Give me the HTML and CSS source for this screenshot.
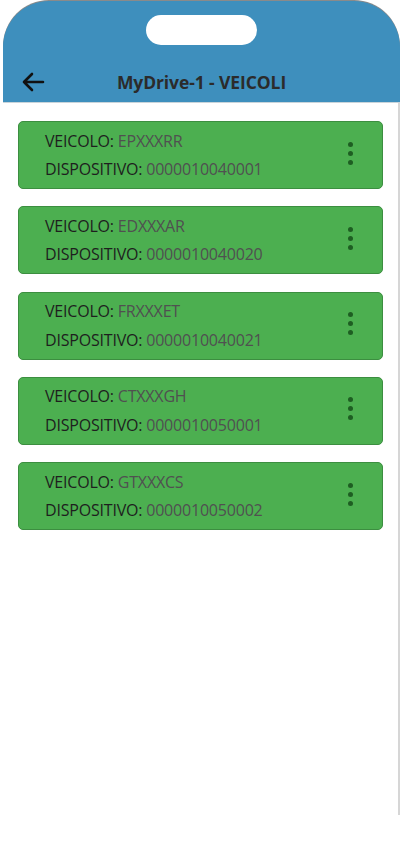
FILE: index.html
```html
<!DOCTYPE html>
<html lang="it">
<head>
	<meta charset="utf-8" />
	<meta name="viewport" content="width=device-width, initial-scale=1" />
	<title>MyDrive-1 - VEICOLI</title>
	<link rel="stylesheet" href="styles.css">
</head>
<body>

	<div class="phone">

		<header class="topbar">
			<div class="notch"></div>
			<div class="bar">
				<svg class="back" width="24" height="20" viewBox="0 0 24 20">
					<path d="M22 10H3M11 2L3 10L11 18" fill="none" stroke="#111" stroke-width="2.6" stroke-linecap="round" stroke-linejoin="round"/>
				</svg>
				<h1>MyDrive-1 - VEICOLI</h1>
			</div>
		</header>

		<main class="list">

			<section class="card">
				<div class="info">
					<p><span>VEICOLO:</span> <em>EPXXXRR</em></p>
					<p><span>DISPOSITIVO:</span> <em>0000010040001</em></p>
				</div>
				<div class="more"><i></i><i></i><i></i></div>
			</section>

			<section class="card">
				<div class="info">
					<p><span>VEICOLO:</span> <em>EDXXXAR</em></p>
					<p><span>DISPOSITIVO:</span> <em>0000010040020</em></p>
				</div>
				<div class="more"><i></i><i></i><i></i></div>
			</section>

			<section class="card">
				<div class="info">
					<p><span>VEICOLO:</span> <em>FRXXXET</em></p>
					<p><span>DISPOSITIVO:</span> <em>0000010040021</em></p>
				</div>
				<div class="more"><i></i><i></i><i></i></div>
			</section>

			<section class="card">
				<div class="info">
					<p><span>VEICOLO:</span> <em>CTXXXGH</em></p>
					<p><span>DISPOSITIVO:</span> <em>0000010050001</em></p>
				</div>
				<div class="more"><i></i><i></i><i></i></div>
			</section>

			<section class="card">
				<div class="info">
					<p><span>VEICOLO:</span> <em>GTXXXCS</em></p>
					<p><span>DISPOSITIVO:</span> <em>0000010050002</em></p>
				</div>
				<div class="more"><i></i><i></i><i></i></div>
			</section>

		</main>

	</div>

</body>
</html>
```

FILE: styles.css
```css
* {
	box-sizing: border-box;
	font-family: 'Open Sans', 'Noto Sans', sans-serif;
}

body {
	margin: 0;
	padding: 0;
	background: #FFFFFF;
}

.phone {
	width: 400px;
	padding: 1px 0 0 3px;
}

/*Header*/
.topbar {
	background: #3E8FBD;
	border-radius: 46px 46px 0 0;
	box-shadow: 0 -1px 0 #8A8A8A;
	height: 102px;
	display: flex;
	flex-direction: column;
	align-items: center;
	border-bottom: 1px solid #C9D4DA;
}
.notch {
	margin-top: 14px;
	width: 111px;
	height: 30px;
	border-radius: 15px;
	background: #FFFFFF;
}
.bar {
	width: 100%;
	display: flex;
	align-items: center;
	justify-content: center;
	margin-top: 24px;
	height: 26px;
	position: relative;
}
.back {
	position: absolute;
	left: 18px;
	top: 3px;
}
.bar h1 {
	margin: 0;
	font-size: 17.5px;
	font-weight: 700;
	color: #2B2B2B;
	letter-spacing: -0.1px;
}

/*List*/
.list {
	display: flex;
	flex-direction: column;
	gap: 17.3px;
	padding: 18px 0 0 15px;
	width: 397px;
	height: 712px;
	border-right: 2px solid #D6D6D6;
}

.card {
	width: 365px;
	height: 68px;
	flex-shrink: 0;
	background: #4CAF50;
	border: 1px solid #3C8E40;
	border-radius: 5px;
	display: flex;
	justify-content: space-between;
	align-items: center;
	padding: 0 29px 0 26px;
}
.info p {
	margin: 0;
	font-size: 16px;
	line-height: 28.5px;
	letter-spacing: -0.2px;
	color: #1E1E1E;
}
.info em {
	font-style: normal;
	color: #505050;
}
.more {
	display: flex;
	flex-direction: column;
	gap: 4px;
	margin-top: -4px;
}
.more i {
	display: block;
	width: 5px;
	height: 5px;
	border-radius: 50%;
	background: #1E5E22;
}
```
